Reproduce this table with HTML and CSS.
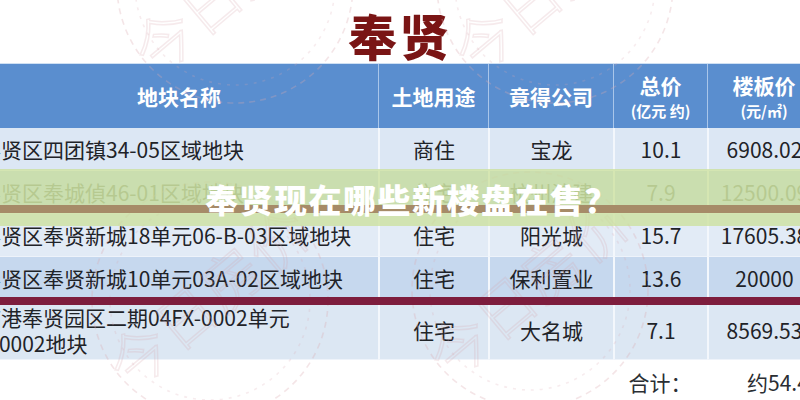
FILE: index.html
```html
<!DOCTYPE html>
<html lang="zh-CN">
<head>
<meta charset="utf-8">
<title>奉贤现在哪些新楼盘在售？</title>
<link rel="stylesheet" href="styles.css">
</head>
<body>
<div class="page">
  <svg class="stamps" width="800" height="400" viewBox="0 0 800 400" aria-hidden="true">
    <g class="stamp" transform="translate(235,-15)">
      <circle r="118"/><circle r="100" class="inner"/>
      <text transform="rotate(-40)" x="0" y="20">今日房价</text>
    </g>
    <g class="stamp" transform="translate(555,-15)">
      <circle r="118"/><circle r="100" class="inner"/>
      <text transform="rotate(-40)" x="0" y="20">今日房价</text>
    </g>
    <g class="stamp" transform="translate(210,300)">
      <circle r="118"/><circle r="100" class="inner"/>
      <text transform="rotate(-40)" x="0" y="20">今日房价</text>
    </g>
    <g class="stamp" transform="translate(530,290)">
      <circle r="118"/><circle r="100" class="inner"/>
      <text transform="rotate(-40)" x="0" y="20">今日房价</text>
    </g>
  </svg>

  <h1 class="title">奉贤</h1>

  <div class="table">
    <div class="th">地块名称</div>
    <div class="th">土地用途</div>
    <div class="th">竟得公司</div>
    <div class="th two"><span>总价</span><small>(亿元 约)</small></div>
    <div class="th two"><span>楼板价</span><small>(元/㎡)</small></div>

    <div class="td r1 name">奉贤区四团镇34-05区域地块</div>
    <div class="td r1">商住</div>
    <div class="td r1">宝龙</div>
    <div class="td r1">10.1</div>
    <div class="td r1">6908.02</div>

    <div class="td r2 name">奉贤区奉城偵46-01区域地块</div>
    <div class="td r2">住宅</div>
    <div class="td r2">杭州滨建</div>
    <div class="td r2">7.9</div>
    <div class="td r2">12500.09</div>

    <div class="td r3 name">奉贤区奉贤新城18单元06-B-03区域地块</div>
    <div class="td r3">住宅</div>
    <div class="td r3">阳光城</div>
    <div class="td r3">15.7</div>
    <div class="td r3">17605.38</div>

    <div class="td r4 name">奉贤区奉贤新城10单元03A-02区域地块</div>
    <div class="td r4">住宅</div>
    <div class="td r4">保利置业</div>
    <div class="td r4">13.6</div>
    <div class="td r4">20000</div>

    <div class="td r5 name">临港奉贤园区二期04FX-0002单元<br>F-0002地块</div>
    <div class="td r5">住宅</div>
    <div class="td r5">大名城</div>
    <div class="td r5">7.1</div>
    <div class="td r5">8569.53</div>

    <div class="tf empty"></div>
    <div class="tf empty"></div>
    <div class="tf empty"></div>
    <div class="tf">合计：</div>
    <div class="tf total">约54.47亿</div>
  </div>

  <div class="band">
    <div class="band-line"></div>
    <h2 class="headline">奉贤现在哪些新楼盘在售？</h2>
  </div>
  <div class="rule"></div>
</div>
</body>
</html>
```

FILE: styles.css
```css
* { box-sizing: border-box; }

html, body {
  margin: 0;
  padding: 0;
  background: #ffffff;
}

body {
  width: 800px;
  height: 400px;
  overflow: hidden;
  font-family: "Noto Sans CJK SC", "Noto Sans", sans-serif;
}

.page {
  position: relative;
  width: 800px;
  height: 400px;
  overflow: hidden;
}

.stamps {
  position: absolute;
  left: 0;
  top: 0;
  z-index: 3;
  pointer-events: none;
}

.stamp circle {
  fill: none;
  stroke: #d9a9b0;
  stroke-width: 1.6;
  stroke-dasharray: 6 5;
  opacity: 0.3;
}

.stamp circle.inner {
  stroke-dasharray: 3 6;
  opacity: 0.22;
}

.stamp text {
  font-family: "Noto Sans CJK SC", sans-serif;
  font-size: 60px;
  font-weight: 300;
  fill: none;
  stroke: #d7a3ab;
  stroke-width: 1.5;
  opacity: 0.22;
  text-anchor: middle;
}

.title {
  margin: 0;
  height: 63px;
  padding-top: 6px;
  display: flex;
  align-items: center;
  justify-content: center;
  font-size: 49px;
  line-height: 1;
  font-weight: 900;
  color: #7a1515;
  letter-spacing: 3px;
}

.table {
  position: relative;
  z-index: 1;
  margin-left: -20px;
  width: 840px;
  display: grid;
  grid-template-columns: 398px 110px 125px 94px 113px;
  grid-template-rows: 64px 43px 43px 43px 43px 60px 40px;
  border-top: 1px solid #cfe0f3;
}

.th {
  background: #5a8ecf;
  color: #ffffff;
  font-weight: 700;
  font-size: 21px;
  display: flex;
  flex-direction: column;
  align-items: center;
  justify-content: center;
  border-left: 1px solid #a9c6ea;
  line-height: 1.25;
}

.th:first-child { border-left: none; }

.th small {
  font-size: 15px;
  font-weight: 700;
  margin-top: 4px;
}

.td {
  display: flex;
  align-items: center;
  justify-content: center;
  font-size: 21px;
  color: #1f2328;
  border-left: 2px solid #f3f7fc;
  border-bottom: 1px solid #eef3fa;
  line-height: 26px;
  white-space: nowrap;
}

.td.name {
  justify-content: flex-start;
  padding-left: 0;
  border-left: none;
  white-space: normal;
}

.r1 { background: #dce7f4; }
.r2 { background: #c7d9ee; color: #7d887a; }
.r3 { background: #e2ebf6; }
.r4 { background: #c6d8ee; }
.r5 { background: #dce7f3; }

.tf {
  display: flex;
  align-items: center;
  justify-content: center;
  font-size: 21px;
  color: #2a2e33;
  padding-top: 4px;
  white-space: nowrap;
}

.tf.total {
  justify-content: flex-start;
  padding-left: 40px;
}

.band {
  position: absolute;
  left: 0;
  top: 169px;
  width: 800px;
  height: 57px;
  z-index: 4;
  background: rgba(202, 224, 152, 0.74);
}

.band-line {
  position: absolute;
  left: 0;
  top: 36px;
  width: 800px;
  height: 8px;
  background: #a68b68;
}

.headline {
  position: absolute;
  left: 205px;
  top: 10px;
  margin: 0;
  font-size: 33px;
  line-height: 40px;
  font-weight: 900;
  color: #ffffff;
  letter-spacing: 1.5px;
  white-space: nowrap;
}

.rule {
  position: absolute;
  left: 0;
  top: 297px;
  width: 800px;
  height: 8px;
  z-index: 4;
  background: #7d1d3d;
}
```
